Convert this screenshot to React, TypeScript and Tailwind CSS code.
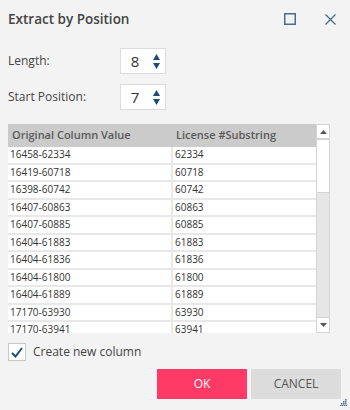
import React from 'react'

const rows: [string, string][] = [
  ['16458-62334', '62334'],
  ['16419-60718', '60718'],
  ['16398-60742', '60742'],
  ['16407-60863', '60863'],
  ['16407-60885', '60885'],
  ['16404-61883', '61883'],
  ['16404-61836', '61836'],
  ['16404-61800', '61800'],
  ['16404-61889', '61889'],
  ['17170-63930', '63930'],
  ['17170-63941', '63941'],
]

function Spinner({ value }: { value: string }) {
  return (
    <div className="w-[46px] h-[26px] bg-white border border-[#dcdcdc] flex items-center">
      <span className="w-[28px] text-center text-[15px] text-[#333]">{value}</span>
      <div className="flex flex-col items-center gap-[3px] ml-[4px]">
        <svg width="7" height="6" viewBox="0 0 7 6"><path d="M3.5 0 L7 6 L0 6 Z" fill="#1e4c78" /></svg>
        <svg width="7" height="6" viewBox="0 0 7 6"><path d="M0 0 L7 0 L3.5 6 Z" fill="#1e4c78" /></svg>
      </div>
    </div>
  )
}

export default function App() {
  return (
    <div
      className="w-[350px] h-[410px] bg-[#f3f3f3] relative overflow-hidden px-[8px] text-[#444]"
      style={{ fontFamily: '"Open Sans", "Noto Sans", sans-serif' }}
    >
      {/* Header */}
      <div className="h-[38px] flex items-center">
        <h1 className="text-[13.5px] font-semibold text-[#444] flex-1">Extract by Position</h1>
        <svg width="12" height="12" viewBox="0 0 12 12" className="mr-[29px]">
          <rect x="0.75" y="0.75" width="10.5" height="10.5" fill="none" stroke="#4b6c8c" strokeWidth="1.5" />
        </svg>
        <svg width="11" height="11" viewBox="0 0 11 11" className="mr-[6px]">
          <path d="M0.5 0.5 L10.5 10.5 M10.5 0.5 L0.5 10.5" stroke="#4b6c8c" strokeWidth="1.3" />
        </svg>
      </div>

      {/* Fields */}
      <div className="mt-[10px] flex items-center">
        <span className="w-[112px] text-[12px]">Length:</span>
        <Spinner value="8" />
      </div>
      <div className="mt-[10px] flex items-center">
        <span className="w-[112px] text-[12px]">Start Position:</span>
        <Spinner value="7" />
      </div>

      {/* Grid */}
      <div className="mt-[14px] h-[209px] w-[322px] flex overflow-hidden">
        <div className="w-[309px] overflow-hidden">
          <div className="flex h-[23px] bg-[#cbcbcb] text-[11px] font-semibold text-[#5a5a5a] items-center">
            <div className="w-[165px] pl-[4px]">Original Column Value</div>
            <div className="pl-[3px]">License #Substring</div>
          </div>
          {rows.map(([a, b]) => (
            <div key={a} className="flex h-[17.5px] text-[10px] text-[#333] leading-[15px]">
              <div className="w-[163px] bg-white border-b-2 border-[#e8e8e8] pl-[2px]">{a}</div>
              <div className="w-[2px] bg-[#e8e8e8]" />
              <div className="flex-1 bg-white border-b-2 border-[#e8e8e8] pl-[2px]">{b}</div>
            </div>
          ))}
        </div>
        <div className="w-[14px] h-full bg-[#e6e6e6] border border-[#d4d4d4] flex flex-col">
          <div className="h-[15px] bg-white border-b-2 border-[#d4d4d4] flex items-center justify-center">
            <svg width="7" height="4" viewBox="0 0 7 4"><path d="M3.5 0 L7 4 L0 4 Z" fill="#555" /></svg>
          </div>
          <div className="h-[53px] bg-white border-b border-[#d4d4d4]" />
          <div className="flex-1" />
          <div className="h-[15px] bg-white border-t border-[#d4d4d4] flex items-center justify-center">
            <svg width="7" height="4" viewBox="0 0 7 4"><path d="M0 0 L7 0 L3.5 4 Z" fill="#555" /></svg>
          </div>
        </div>
      </div>

      {/* Checkbox */}
      <div className="mt-[10px] flex items-center">
        <div className="w-[18px] h-[18px] bg-white border border-[#c8c8c8] flex items-center justify-center">
          <svg width="12" height="11" viewBox="0 0 12 11">
            <path d="M1 6 L4.5 9.5 L11 1" fill="none" stroke="#1e4c78" strokeWidth="2" />
          </svg>
        </div>
        <span className="ml-[7px] text-[12px]">Create new column</span>
      </div>

      {/* Buttons */}
      <div className="mt-[8px] flex justify-end gap-[4px] pr-[1px]">
        <button className="w-[90px] h-[30px] bg-[#ff3a66] text-white text-[12px]">OK</button>
        <button className="w-[90px] h-[30px] bg-[#dcdcdc] text-[#555] text-[12px]">CANCEL</button>
      </div>

      {/* Resize grip */}
      <svg width="7" height="7" viewBox="0 0 7 7" className="absolute right-[3px] bottom-[4px]">
        <g fill="#4b6c8c">
          <rect x="5" y="0" width="1.5" height="1.5" />
          <rect x="3" y="2" width="1.5" height="1.5" />
          <rect x="5" y="2" width="1.5" height="1.5" />
          <rect x="1" y="4" width="1.5" height="1.5" />
          <rect x="3" y="4" width="1.5" height="1.5" />
          <rect x="5" y="4" width="1.5" height="1.5" />
          <rect x="0" y="6" width="1.5" height="1" />
          <rect x="2" y="6" width="1.5" height="1" />
          <rect x="4" y="6" width="1.5" height="1" />
          <rect x="6" y="6" width="1" height="1" />
        </g>
      </svg>
    </div>
  )
}
